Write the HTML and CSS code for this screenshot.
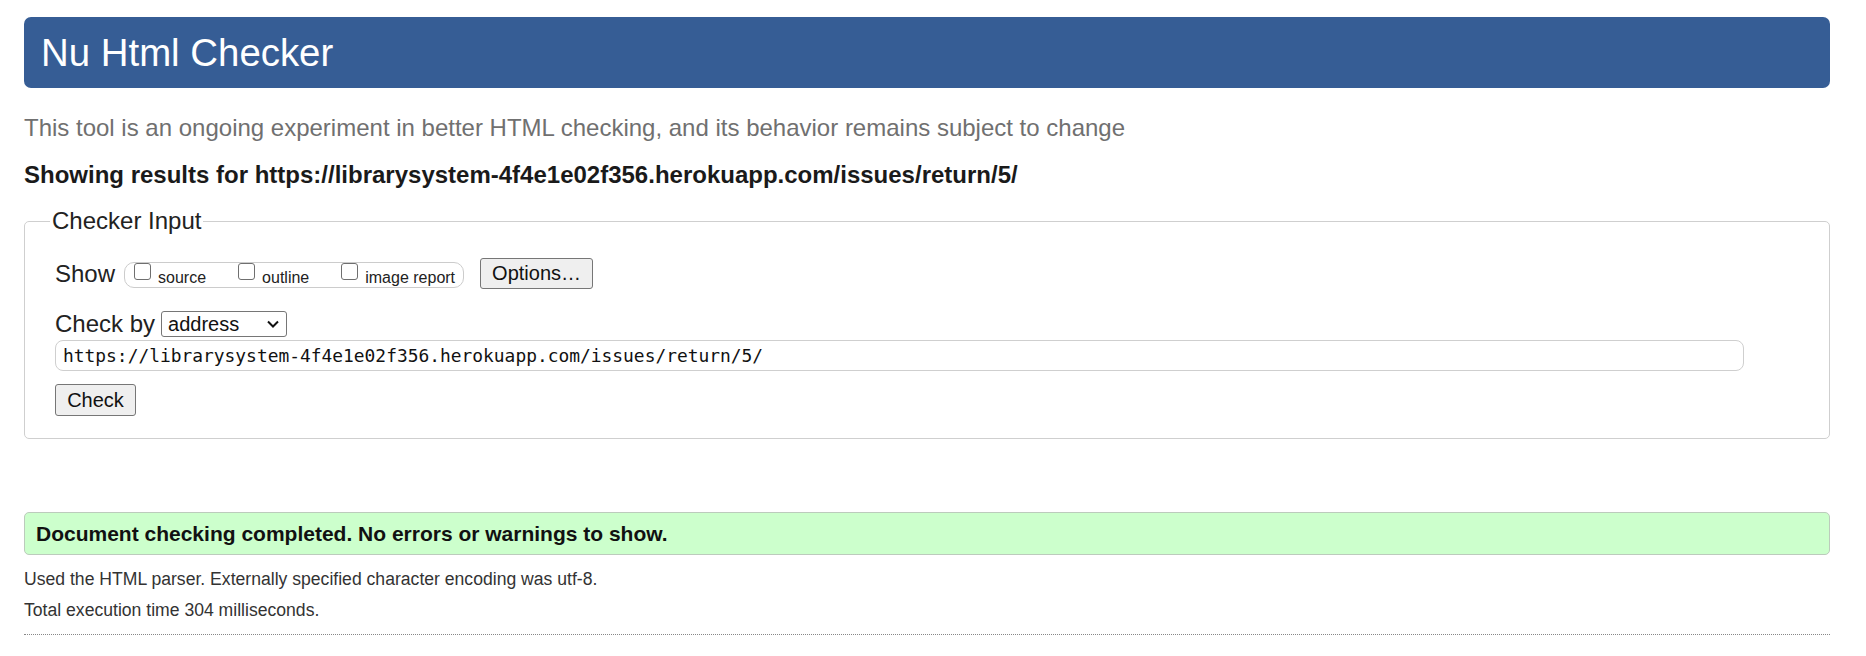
FILE: index.html
```html
<!DOCTYPE html>
<html lang="en">
<head>
<meta charset="utf-8">
<title>Nu Html Checker</title>
<link rel="stylesheet" href="styles.css">
</head>
<body>
<h1 class="header">Nu Html Checker</h1>
<p class="subtitle">This tool is an ongoing experiment in better HTML checking, and its behavior remains subject to change</p>
<p class="showing">Showing results for https://librarysystem-4f4e1e02f356.herokuapp.com/issues/return/5/</p>
<fieldset class="checker">
  <legend class="legend">Checker Input</legend>
  <div class="row-show">
    <span class="label">Show</span>
    <span class="group">
      <label class="opt"><input type="checkbox" class="cb"><span>source</span></label>
      <label class="opt"><input type="checkbox" class="cb"><span>outline</span></label>
      <label class="opt"><input type="checkbox" class="cb"><span>image report</span></label>
    </span>
    <button class="btn btn-options" type="button">Options…</button>
  </div>
  <div class="row-checkby">
    <span class="label">Check by</span>
    <span class="select">
      <span>address</span>
      <svg class="chev" width="14" height="10" viewBox="0 0 14 10"><path d="M2 2.5 L7 7.5 L12 2.5" fill="none" stroke="#111" stroke-width="2"/></svg>
    </span>
  </div>
  <div class="url">https://librarysystem-4f4e1e02f356.herokuapp.com/issues/return/5/</div>
  <button class="btn btn-check" type="button">Check</button>
</fieldset>
<div class="success">Document checking completed. No errors or warnings to show.</div>
<p class="info info-first">Used the HTML parser. Externally specified character encoding was utf-8.</p>
<p class="info">Total execution time 304 milliseconds.</p>
<hr class="rule">
</body>
</html>
```
FILE: styles.css
```css
html, body {
  background: #fff;
}
body {
  margin: 0;
  padding: 17px 36px 0 24px;
  font-family: "Liberation Sans", Arial, sans-serif;
  color: #222;
}
.header {
  margin: 0;
  height: 71px;
  box-sizing: border-box;
  background: #365d95;
  border-radius: 7px;
  color: #fff;
  font-size: 38.4px;
  font-weight: normal;
  padding-left: 17px;
  display: flex;
  align-items: center;
}
.subtitle {
  margin: 26px 0 0;
  font-size: 24px;
  line-height: 28px;
  color: #707070;
}
.showing {
  margin: 19px 0 0;
  font-size: 24px;
  line-height: 28px;
  font-weight: bold;
  color: #1a1a1a;
}
.checker {
  margin: 18px 0 0;
  border: 1px solid #cfcfcf;
  border-radius: 5px;
  padding: 23px 30px 22px 30px;
}
.legend {
  font-size: 24px;
  line-height: 28px;
  padding: 0 2px;
  margin-left: -5px;
  color: #222;
}
.row-show {
  display: flex;
  align-items: center;
  height: 31px;
}
.label {
  font-size: 24px;
  line-height: 28px;
  color: #222;
}
.group {
  margin-left: 9px;
  height: 26px;
  box-sizing: border-box;
  border: 1px solid #cccccc;
  border-radius: 10px;
  display: flex;
  align-items: flex-start;
  gap: 32px;
  padding: 0 8px 0 9px;
  margin-top: 2px;
}
.opt {
  display: flex;
  align-items: flex-start;
  font-size: 16px;
  line-height: 18px;
  color: #222;
}
.opt span {
  padding-top: 6px;
}
.cb {
  appearance: none;
  -webkit-appearance: none;
  width: 17px;
  height: 17px;
  margin: 0 7px 0 0;
  box-sizing: border-box;
  border: 1.5px solid #6f6f6f;
  border-radius: 3px;
  background: #fff;
}
.btn {
  font-family: "Liberation Sans", Arial, sans-serif;
  font-size: 20px;
  color: #111;
  background: #efefef;
  border: 1px solid #767676;
  border-radius: 3px;
  padding: 0;
  box-sizing: border-box;
}
.btn-options {
  margin-left: 16px;
  width: 113px;
  height: 31px;
}
.row-checkby {
  margin-top: 22px;
  display: flex;
  align-items: center;
  height: 26px;
  gap: 6px;
}
.select {
  width: 126px;
  height: 26px;
  box-sizing: border-box;
  border: 1px solid #767676;
  border-radius: 3px;
  display: flex;
  align-items: center;
  justify-content: space-between;
  padding: 0 6px 0 6px;
  font-size: 20px;
  color: #111;
  background: #fff;
}
.chev {
  display: block;
}
.url {
  margin-top: 3px;
  width: 1689px;
  height: 31px;
  box-sizing: border-box;
  border: 1px solid #cfcfcf;
  border-radius: 8px;
  padding-left: 7px;
  display: flex;
  align-items: center;
  font-family: "DejaVu Sans Mono", "Liberation Mono", monospace;
  font-size: 17.9px;
  color: #111;
}
.btn-check {
  display: block;
  margin-top: 13px;
  width: 81px;
  height: 32px;
}
.success {
  margin-top: 73px;
  height: 43px;
  box-sizing: border-box;
  background: #ccffcc;
  border: 1px solid #bccbbc;
  border-radius: 5px;
  padding-left: 11px;
  display: flex;
  align-items: center;
  font-size: 21px;
  font-weight: bold;
  color: #111;
}
.info {
  margin: 7px 0 0;
  font-size: 17.6px;
  line-height: 24px;
  color: #333;
}
.info-first {
  margin-top: 12px;
}
.rule {
  margin: 12px 0 0;
  border: 0;
  border-top: 1px dotted #888;
  height: 0;
}
```
